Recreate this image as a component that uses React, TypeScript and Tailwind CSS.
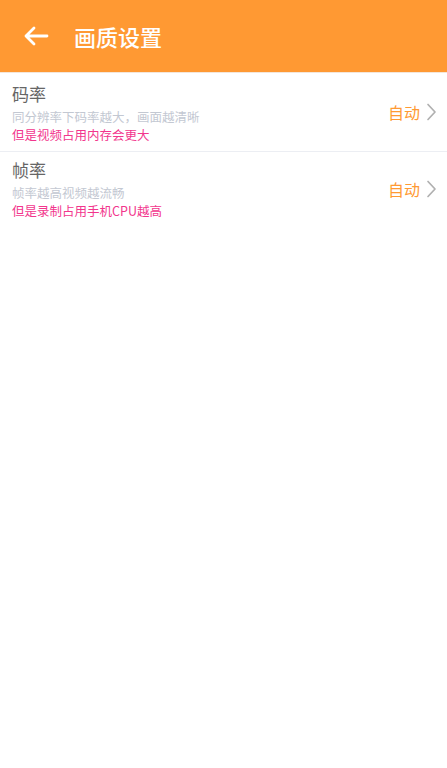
import React from "react";

const font = { fontFamily: '"Noto Sans CJK SC", "Noto Sans", sans-serif' };

function Row({ title, sub, warn, border, top }: { title: string; sub: string; warn: string; border?: boolean; top: string }) {
  return (
    <div className={`flex items-center bg-white pl-3 pr-[10px] ${border ? "border-b border-[#eceef3]" : ""}`}>
      <div className={`flex-1 ${top} pb-[7px]`}>
        <div className="text-[17px] leading-[24px] text-[#666666]">{title}</div>
        <div className="mt-[2px] text-[12.5px] leading-[18px] text-[#c3c8d2]">{sub}</div>
        <div className="text-[12.5px] leading-[18px] text-[#f2368d]">{warn}</div>
      </div>
      <div className="flex items-center gap-[6px] mt-[-1px]">
        <span className="text-[16px] text-[#ff9a33]">自动</span>
        <svg width="11" height="18" viewBox="0 0 11 18" fill="none">
          <path d="M2 1.5 L9 9 L2 16.5" stroke="#b0b0b0" strokeWidth="1.7" strokeLinecap="round" strokeLinejoin="round" />
        </svg>
      </div>
    </div>
  );
}

export default function App() {
  return (
    <div className="w-[447px] h-[768px] bg-white flex flex-col" style={font}>
      <div className="h-[73px] bg-[#ff9933] flex items-center shrink-0 border-b border-[#f3e6da]">
        <svg className="ml-[23px]" width="26" height="20" viewBox="0 0 26 20" fill="none">
          <path d="M24 10 H3 M11 2 L3 10 L11 18" stroke="white" strokeWidth="2.8" strokeLinecap="round" strokeLinejoin="round" />
        </svg>
        <span className="ml-[25px] text-[22px] text-white font-medium">画质设置</span>
      </div>
      <Row title="码率" sub="同分辨率下码率越大，画面越清晰" warn="但是视频占用内存会更大" border top="pt-[9px]" />
      <Row title="帧率" sub="帧率越高视频越流畅" warn="但是录制占用手机CPU越高" top="pt-[6px]" />
      <div className="flex-1 bg-white" />
    </div>
  );
}
